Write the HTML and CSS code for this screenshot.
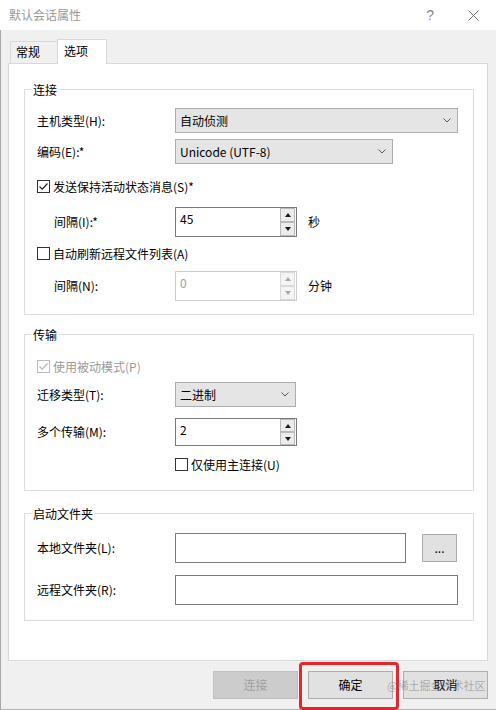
FILE: index.html
```html
<!DOCTYPE html>
<html lang="zh-CN">
<head>
<meta charset="utf-8">
<title>默认会话属性</title>
<link rel="stylesheet" href="styles.css">
</head>
<body>
<div class="window">
  <div class="titlebar">
    <span class="title">默认会话属性</span>
    <span class="help">?</span>
    <span class="close"><svg width="11" height="11" viewBox="0 0 11 11"><path d="M0.5 0.5L10.5 10.5M10.5 0.5L0.5 10.5" stroke="#6e6e6e" stroke-width="1" fill="none"/></svg></span>
  </div>
  <div class="client">
    <div class="tabs">
      <div class="tab">常规</div>
      <div class="tab active">选项</div>
    </div>
    <div class="panel">
      <fieldset class="group g1">
        <legend>连接</legend>
        <div class="row h25">
          <span class="lbl">主机类型(H):</span>
          <div class="select w283"><span>自动侦测</span><svg class="chev" width="8" height="5" viewBox="0 0 8 5"><path d="M0.5 0.5L4 4L7.5 0.5" stroke="#5a5a5a" fill="none"/></svg></div>
        </div>
        <div class="row h25 mt6">
          <span class="lbl">编码(E):*</span>
          <div class="select w218"><span>Unicode (UTF-8)</span><svg class="chev" width="8" height="5" viewBox="0 0 8 5"><path d="M0.5 0.5L4 4L7.5 0.5" stroke="#5a5a5a" fill="none"/></svg></div>
        </div>
        <div class="row h20 mt12">
          <span class="cb"><svg width="11" height="11" viewBox="0 0 11 11"><path d="M1.5 5.5L4.2 8.2L9.5 2.5" stroke="#222" stroke-width="1.2" fill="none"/></svg></span>
          <span>发送保持活动状态消息(S)*</span>
        </div>
        <div class="row h30 mt11">
          <span class="lbl ind">间隔(I):*</span>
          <div class="field w122">
            <span class="val">45</span>
            <span class="spin"><span class="sb"><i class="up"></i></span><span class="sb"><i class="down"></i></span></span>
          </div>
          <span class="unit">秒</span>
        </div>
        <div class="row h20 mt6">
          <span class="cb"></span>
          <span>自动刷新远程文件列表(A)</span>
        </div>
        <div class="row h30 mt8">
          <span class="lbl ind">间隔(N):</span>
          <div class="field w122 disabled">
            <span class="val">0</span>
            <span class="spin"><span class="sb"><i class="up"></i></span><span class="sb"><i class="down"></i></span></span>
          </div>
          <span class="unit">分钟</span>
        </div>
      </fieldset>

      <fieldset class="group g2">
        <legend>传输</legend>
        <div class="row h20 dis">
          <span class="cb off"><svg width="11" height="11" viewBox="0 0 11 11"><path d="M1.5 5.5L4.2 8.2L9.5 2.5" stroke="#b4b4b4" stroke-width="1.2" fill="none"/></svg></span>
          <span>使用被动模式(P)</span>
        </div>
        <div class="row h25 mt6">
          <span class="lbl">迁移类型(T):</span>
          <div class="select w121"><span>二进制</span><svg class="chev" width="8" height="5" viewBox="0 0 8 5"><path d="M0.5 0.5L4 4L7.5 0.5" stroke="#5a5a5a" fill="none"/></svg></div>
        </div>
        <div class="row h28 mt11">
          <span class="lbl">多个传输(M):</span>
          <div class="field w122">
            <span class="val">2</span>
            <span class="spin"><span class="sb"><i class="up"></i></span><span class="sb"><i class="down"></i></span></span>
          </div>
        </div>
        <div class="row h20 mt8 indcb">
          <span class="cb"></span>
          <span>仅使用主连接(U)</span>
        </div>
      </fieldset>

      <fieldset class="group g3">
        <legend>启动文件夹</legend>
        <div class="row h30">
          <span class="lbl">本地文件夹(L):</span>
          <div class="field w231"><span class="val"></span></div>
          <span class="browse">...</span>
        </div>
        <div class="row h30 mt12">
          <span class="lbl">远程文件夹(R):</span>
          <div class="field w283"><span class="val"></span></div>
        </div>
      </fieldset>
    </div>
    <div class="buttons">
      <span class="btn disabled">连接</span>
      <span class="btn">确定</span>
      <span class="btn">取消</span>
    </div>
  </div>
  <div class="highlight"></div>
  <div class="watermark">@稀土掘金技术社区</div>
</div>
</body>
</html>
```

FILE: styles.css
```css
* { box-sizing: border-box; }
html, body { margin: 0; padding: 0; }
body {
  width: 496px;
  height: 710px;
  overflow: hidden;
  background: #f0f0f0;
  font-family: "Noto Sans CJK SC", "Microsoft YaHei", sans-serif;
  font-size: 12px;
  color: #000;
}
.window {
  position: relative;
  width: 496px;
  height: 710px;
  background: #f0f0f0;
}
.titlebar {
  height: 30px;
  background: #fff;
  display: flex;
  align-items: center;
  padding: 0 17px 0 9px;
}
.title { color: #999; line-height: 16px; font-size: 12px; }
.help { margin-left: auto; color: #8a8a8a; font-size: 14px; line-height: 16px; font-family: "Liberation Sans", sans-serif; }
.close { margin-left: 34px; display: flex; }
.client {
  height: 680px;
  border-left: 1px solid #a9a9a9;
  border-bottom: 1px solid #b0b0b0;
  padding: 9px 8px 0 7px;
}
.tabs {
  display: flex;
  align-items: flex-end;
  height: 24px;
  padding-left: 2px;
  position: relative;
  z-index: 1;
}
.tab {
  width: 47px;
  height: 22px;
  border: 1px solid #d9d9d9;
  border-right: none;
  border-bottom: none;
  background: #f0f0f0;
  padding-left: 5px;
  line-height: 20px;
}
.tab.active {
  width: 50px;
  height: 25px;
  border-right: 1px solid #d9d9d9;
  background: #fff;
  padding-left: 6px;
  padding-top: 1px;
  margin-bottom: -1px;
}
.panel {
  width: 480px;
  height: 598px;
  background: #fff;
  border: 1px solid #d9d9d9;
  padding: 17px 14px 0 15px;
}
.group {
  margin: 0;
  min-width: 0;
  width: 450px;
  border: 1px solid #dcdcdc;
  padding: 10px 0 13px 12px;
}
.group legend {
  margin-left: -6px;
  padding: 0 2px;
  line-height: 17px;
  font-size: 12px;
}
.g2 { margin-top: 11px; padding: 13px 0 16px 12px; }
.g3 { margin-top: 14px; padding: 11px 0 15px 12px; }
.row { display: flex; align-items: center; }
.h20 { height: 20px; }
.h25 { height: 25px; }
.h28 { height: 28px; }
.h30 { height: 30px; }
.mt6 { margin-top: 6px; }
.mt8 { margin-top: 8px; }
.mt11 { margin-top: 11px; }
.mt12 { margin-top: 12px; }
.lbl { width: 138px; flex: none; line-height: 16px; }
.lbl.ind { padding-left: 17px; }
.indcb { padding-left: 138px; }
.w283 { width: 283px; }
.w218 { width: 218px; }
.w231 { width: 231px; }
.w122 { width: 122px; }
.w121 { width: 121px; }
.select {
  height: 100%;
  display: flex;
  align-items: center;
  justify-content: space-between;
  border: 1px solid #adadad;
  background: #e5e5e5;
  padding: 0 6px 0 4px;
  line-height: 16px;
}
.chev { flex: none; }
.field {
  height: 100%;
  display: flex;
  border: 1px solid #7a7a7a;
  background: #fff;
}
.field .val { flex: 1; padding: 3px 4px; line-height: 16px; }
.field.disabled { border-color: #cccccc; }
.field.disabled .val { color: #a0a0a0; }
.spin {
  width: 15px;
  flex: none;
  display: flex;
  flex-direction: column;
  margin-right: 1px;
}
.sb {
  flex: 1;
  border: 1px solid #b9b9b9;
  background: #ececec;
  display: flex;
  align-items: center;
  justify-content: center;
}
.sb i { display: block; width: 0; height: 0; border-left: 3px solid transparent; border-right: 3px solid transparent; }
.sb .up { border-bottom: 4px solid #1a1a1a; }
.sb .down { border-top: 4px solid #1a1a1a; }
.disabled .sb { border-color: #dadada; background: #f4f4f4; }
.disabled .sb .up { border-bottom-color: #a8a8a8; }
.disabled .sb .down { border-top-color: #a8a8a8; }
.unit { margin-left: 11px; line-height: 16px; }
.cb {
  width: 13px;
  height: 13px;
  flex: none;
  border: 1px solid #333;
  background: #fff;
  margin-right: 3px;
  display: flex;
  align-items: center;
  justify-content: center;
}
.cb.off { border-color: #bcbcbc; }
.dis { color: #9a9a9a; }
.browse {
  width: 35px;
  height: 28px;
  margin-left: 16px;
  border: 1px solid #adadad;
  background: #e1e1e1;
  display: flex;
  align-items: center;
  justify-content: center;
  line-height: 16px;
}
.buttons {
  display: flex;
  justify-content: flex-end;
  gap: 10px;
  margin-top: 10px;
}
.btn {
  width: 85px;
  height: 28px;
  border: 1px solid #adadad;
  background: #e1e1e1;
  display: flex;
  align-items: center;
  justify-content: center;
  line-height: 16px;
}
.btn.disabled { background: #cccccc; border-color: #bfbfbf; color: #a0a0a0; }
.highlight {
  position: absolute;
  left: 299px;
  top: 662px;
  width: 100px;
  height: 48px;
  border: 3px solid #e5272b;
  border-radius: 4px;
}
.watermark {
  position: absolute;
  left: 387px;
  top: 677px;
  font-size: 11px;
  line-height: 16px;
  color: rgba(120, 120, 120, 0.55);
  white-space: nowrap;
}
```
